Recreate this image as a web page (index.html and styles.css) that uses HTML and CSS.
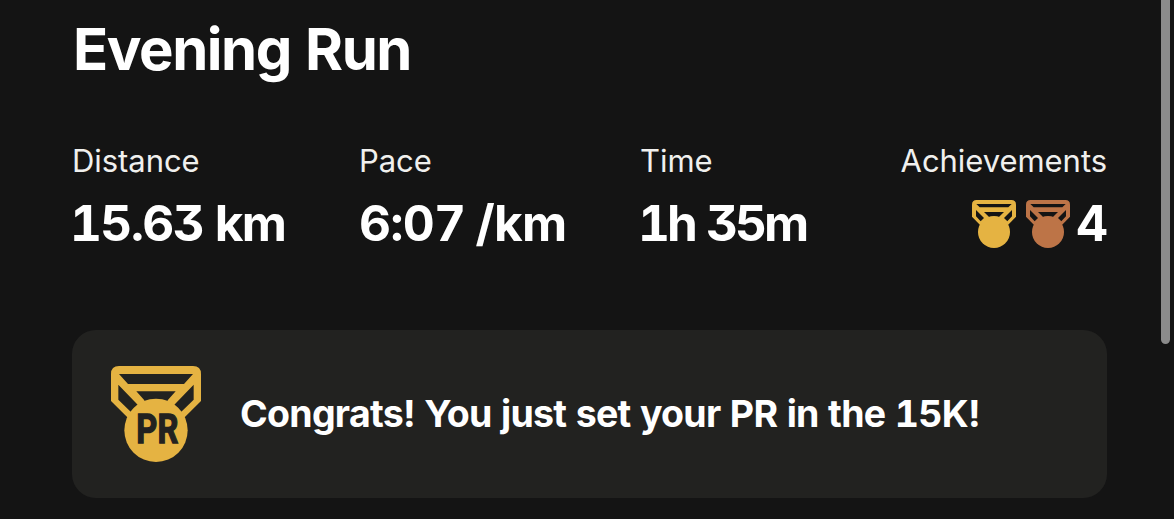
FILE: index.html
```html
<!DOCTYPE html>
<html lang="en">
<head>
<meta charset="utf-8">
<title>Evening Run</title>
<link rel="stylesheet" href="styles.css">
</head>
<body>
<svg class="defs" aria-hidden="true">
  <symbol id="medal" viewBox="0 0 132 144">
    <path fill="currentColor" fill-rule="evenodd" d="M14 0H118Q132 0 132 14V50L105 78H27L0 50V14Q0 0 14 0ZM13 12H119L109 22H23ZM36 36H96L80 52H52ZM12 30L36 54L26 64L12 49ZM120 30L96 54L106 64L120 49Z"/>
    <circle fill="currentColor" cx="66" cy="96" r="48"/>
  </symbol>
</svg>
<main class="page">
  <h1 class="title">Evening Run</h1>
  <section class="stats">
    <div class="stat distance"><span class="label">Distance</span><span class="value">15.63 km</span></div>
    <div class="stat pace"><span class="label">Pace</span><span class="value">6:07 /km</span></div>
    <div class="stat time"><span class="label">Time</span><span class="value">1h 35m</span></div>
    <div class="stat achievements">
      <span class="label">Achievements</span>
      <span class="value awards"><svg class="medal gold"><use href="#medal"/></svg><svg class="medal bronze"><use href="#medal"/></svg><span class="count">4</span></span>
    </div>
  </section>
  <section class="notice">
    <svg class="pr-medal" viewBox="0 0 270 288">
      <path fill="currentColor" fill-rule="evenodd" d="M24 0H246Q270 0 270 24V105L218 157H52L0 105V24Q0 0 24 0ZM24 24H246L219 54H51ZM76 76H194L170 103V110H100V103ZM22 56L80 116L59 137L22 101ZM248 56L190 116L211 137L248 101Z"/>
      <circle fill="currentColor" cx="135" cy="193" r="95"/>
      <text class="pr-text" x="76" y="232" textLength="126" lengthAdjust="spacingAndGlyphs">PR</text>
    </svg>
    <p class="message">Congrats! You just set your PR in the 15K!</p>
  </section>
</main>
<div class="scrollbar"></div>
</body>
</html>
```
FILE: styles.css
```css
* { box-sizing: border-box; }
body {
  margin: 0;
  height: 519px;
  overflow: hidden;
  background: #141414;
  color: #fff;
  font-family: Inter, Roboto, sans-serif;
  font-feature-settings: "tnum", "cv09";
}
.defs { position: absolute; width: 0; height: 0; }
.page { padding: 13px 67px 0 72px; }
.title { margin: 0; height: 72px; line-height: 72px; font-size: 58px; font-weight: 700; letter-spacing: -1.45px; text-indent: 1px; white-space: nowrap; }
.stats { display: grid; grid-template-columns: 287px 281px 200px 1fr; margin-top: 56px; height: 189px; align-content: start; }
.stat { display: flex; flex-direction: column; white-space: nowrap; }
.label { height: 40px; line-height: 40px; font-size: 31px; letter-spacing: -0.05px; color: #f0f0ee; }
.value { height: 64px; margin-top: 10px; line-height: 64px; font-size: 49.5px; font-weight: 700; letter-spacing: -1px; }
.distance .value { margin-left: -2px; letter-spacing: -1.65px; }
.pace .value { letter-spacing: -0.8px; word-spacing: -2px; }
.time .value { margin-left: -2px; letter-spacing: -3px; word-spacing: 1px; }
.achievements { align-items: flex-end; }
.awards { display: flex; align-items: center; gap: 10px; }
.medal { width: 44px; height: 48px; margin-top: 2px; }
.count { margin: 1px 0 0 -4px; font-size: 49px; letter-spacing: -1px; }
.gold, .pr-medal { color: #e5b342; }
.bronze { color: #bd7447; }
.notice { height: 168px; border-radius: 24px; background: #222220; display: flex; align-items: center; padding-left: 39px; }
.pr-medal { width: 90px; height: 96px; }
.pr-text { font-family: Roboto, sans-serif; font-weight: 700; font-size: 124px; fill: #222220; stroke: #222220; stroke-width: 4px; }
.message { margin: 0 0 0 39px; font-size: 37.5px; font-weight: 650; letter-spacing: -0.73px; line-height: 48px; white-space: nowrap; }
.scrollbar { position: absolute; top: 0; right: 4px; width: 9px; height: 344px; border-radius: 0 0 5px 5px; background: #8b8b8b; }
```
